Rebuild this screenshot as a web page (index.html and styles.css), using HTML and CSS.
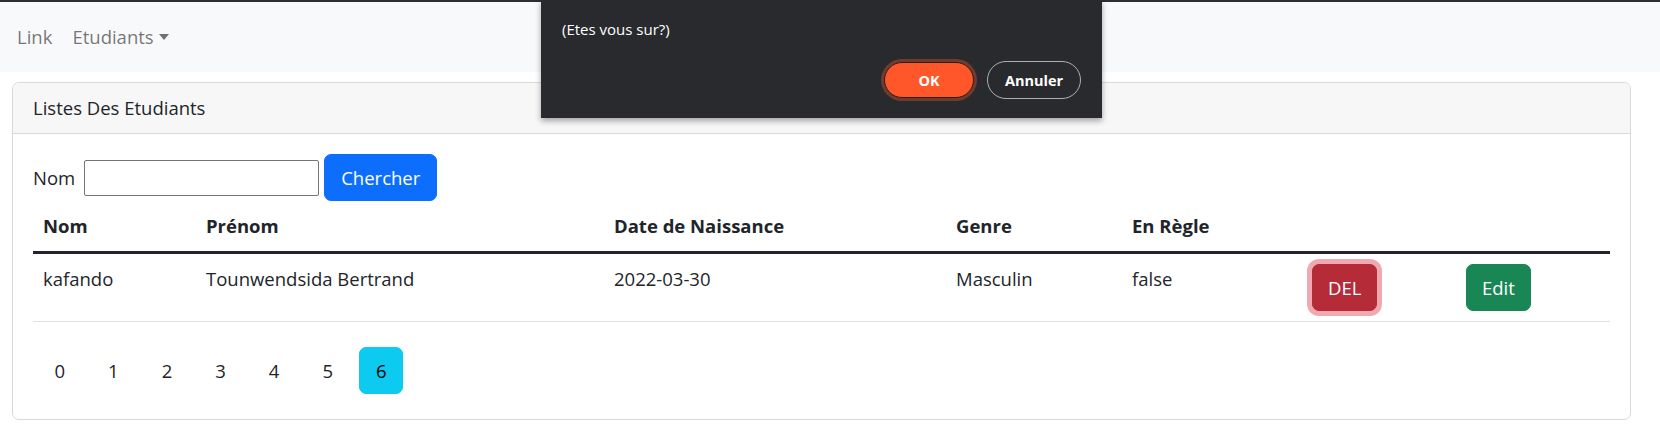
FILE: index.html
```html
<!DOCTYPE html>
<html lang="fr">
<head>
<meta charset="utf-8">
<title>Etudiants</title>
<link rel="stylesheet" href="styles.css">
</head>
<body>
<div class="topstrip"></div>
<nav class="navbar">
  <a class="nav-link" href="#">Link</a>
  <a class="nav-link dropdown-toggle" href="#">Etudiants</a>
</nav>
<main class="page">
  <section class="card">
    <div class="card-header">Listes Des Etudiants</div>
    <div class="card-body">
      <form class="search">
        <label class="search-label" for="nom">Nom</label>
        <input class="search-input" id="nom" type="text">
        <button class="btn btn-primary" type="button">Chercher</button>
      </form>
      <table class="table">
        <colgroup>
          <col class="c-nom"><col class="c-prenom"><col class="c-date"><col class="c-genre"><col class="c-regle"><col class="c-del"><col class="c-edit">
        </colgroup>
        <thead>
          <tr><th>Nom</th><th>Prénom</th><th>Date de Naissance</th><th>Genre</th><th>En Règle</th><th></th><th></th></tr>
        </thead>
        <tbody>
          <tr>
            <td>kafando</td>
            <td>Tounwendsida Bertrand</td>
            <td>2022-03-30</td>
            <td>Masculin</td>
            <td>false</td>
            <td><button class="btn btn-danger is-focused" type="button">DEL</button></td>
            <td><button class="btn btn-success" type="button">Edit</button></td>
          </tr>
        </tbody>
      </table>
      <nav class="pager">
        <button class="btn page-btn" type="button">0</button>
        <button class="btn page-btn" type="button">1</button>
        <button class="btn page-btn" type="button">2</button>
        <button class="btn page-btn" type="button">3</button>
        <button class="btn page-btn" type="button">4</button>
        <button class="btn page-btn" type="button">5</button>
        <button class="btn page-btn active" type="button">6</button>
      </nav>
    </div>
  </section>
</main>
<div class="dialog" role="dialog">
  <p class="dialog-msg">(Etes vous sur?)</p>
  <div class="dialog-actions">
    <button class="dlg-btn dlg-ok" type="button">OK</button>
    <button class="dlg-btn dlg-cancel" type="button">Annuler</button>
  </div>
</div>
</body>
</html>
```
FILE: styles.css
```css
* { box-sizing: border-box; }

html, body {
  margin: 0;
  padding: 0;
  background: #fff;
}

body {
  font-family: "Open Sans", "Noto Sans", sans-serif;
  font-size: 18.5px;
  line-height: 30px;
  color: #212529;
  width: 1660px;
  height: 427px;
  overflow: hidden;
  position: relative;
}

.topstrip {
  height: 2px;
  background: #2b2e34;
}

.navbar {
  height: 70px;
  background: #f8f9fa;
  display: flex;
  align-items: center;
  padding: 0 17px;
  gap: 20px;
}

.nav-link {
  color: rgba(0, 0, 0, .55);
  text-decoration: none;
  line-height: 30px;
}

.dropdown-toggle::after {
  content: "";
  display: inline-block;
  margin-left: 5px;
  vertical-align: 4px;
  border-top: 6px solid;
  border-left: 5.5px solid transparent;
  border-right: 5.5px solid transparent;
}

.page {
  padding: 10px 29px 0 12px;
}

.card {
  border: 1px solid #d9d9d9;
  border-radius: 7px;
  background: #fff;
}

.card-header {
  padding: 10px 20px;
  background: #f7f7f7;
  border-bottom: 1px solid #d9d9d9;
  border-radius: 7px 7px 0 0;
}

.card-body {
  padding: 20px;
}

.search {
  display: flex;
  align-items: center;
  margin: 0;
}

.search-label {
  margin-right: 9px;
}

.search-input {
  width: 235px;
  height: 36px;
  border: 1px solid #767676;
  border-radius: 2px;
  margin: 1px 5px 0 0;
  font: inherit;
  padding: 0 4px;
}

.btn {
  font-family: inherit;
  font-size: 18.5px;
  line-height: 30px;
  padding: 7.5px 15px;
  border: 1px solid transparent;
  border-radius: 7px;
  color: #fff;
  cursor: pointer;
}

.btn-primary {
  background: #0d6efd;
  border-color: #0d6efd;
  padding: 7.5px 16px;
}

.btn-danger {
  background: #b52b38;
  border-color: #b52b38;
}

.is-focused {
  box-shadow: 0 0 0 5px rgba(225, 83, 97, .5);
}

.btn-success {
  background: #198754;
  border-color: #198754;
}

.table {
  width: 100%;
  border-collapse: collapse;
  table-layout: fixed;
  margin-bottom: 20px;
}

.c-nom { width: 163px; }
.c-prenom { width: 408px; }
.c-date { width: 342px; }
.c-genre { width: 176px; }
.c-regle { width: 180px; }
.c-del { width: 154px; }
.c-edit { width: 154px; }

.table th,
.table td {
  padding: 10px;
  text-align: left;
  vertical-align: top;
}

.table th {
  font-weight: 700;
  border-bottom: 3px solid #212529;
}

.table td {
  border-bottom: 1px solid #dee2e6;
}

.table td .btn {
  vertical-align: top;
}

.pager {
  display: flex;
}

.page-btn {
  margin: 5px;
  background: transparent;
  color: #212529;
  padding: 7.5px 15.5px;
}

.page-btn.active {
  background: #0dcaf0;
  border-color: #0dcaf0;
  color: #000;
}

.dialog {
  position: absolute;
  left: 541px;
  top: 0;
  width: 561px;
  height: 118px;
  background: #292a2d;
  box-shadow: 0 3px 6px rgba(0, 0, 0, .35);
  padding: 19px 21px;
  font-family: "Open Sans", "Noto Sans", sans-serif;
  color: #fff;
}

.dialog-msg {
  margin: 0;
  font-size: 15px;
  line-height: 20px;
}

.dialog-actions {
  display: flex;
  justify-content: flex-end;
  align-items: center;
  gap: 13px;
  margin-top: 22px;
}

.dlg-btn {
  font-family: inherit;
  font-size: 14.5px;
  font-weight: 700;
  color: #fff;
  border-radius: 20px;
  cursor: pointer;
}

.dlg-ok {
  width: 90px;
  height: 36px;
  background: #ff5729;
  border: 1px solid #2e1e1a;
  box-shadow: 0 0 0 3px #6e3b2e;
}

.dlg-cancel {
  width: 94px;
  height: 38px;
  background: transparent;
  border: 1px solid #b0b0b0;
}
```
